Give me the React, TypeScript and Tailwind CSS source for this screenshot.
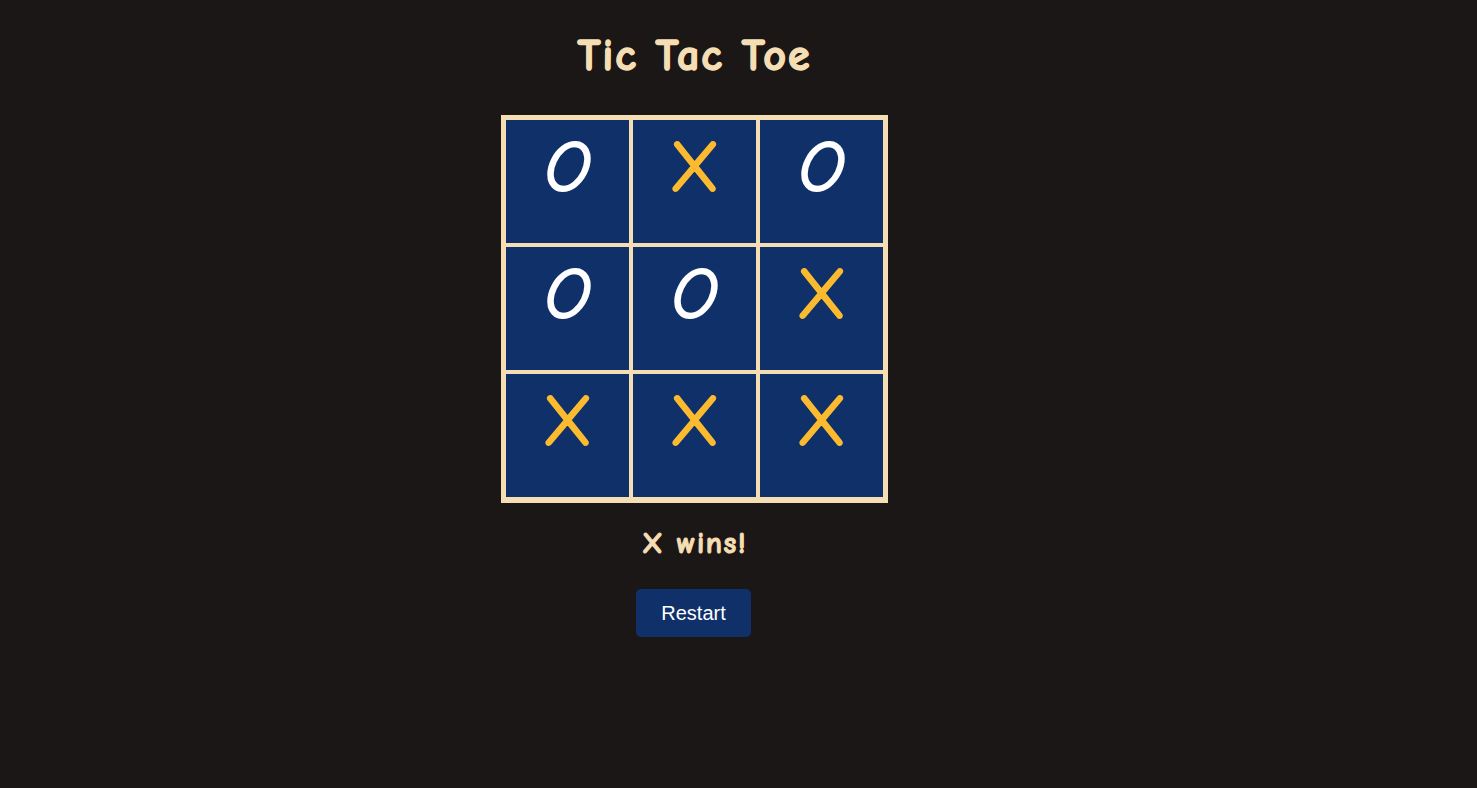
import React, { useState } from 'react';

type Mark = 'X' | 'O' | null;

const initial: Mark[] = ['O', 'X', 'O', 'O', 'O', 'X', 'X', 'X', 'X'];

const comic = { fontFamily: '"Comic Sans MS", "Comic Neue", "Open Sans", sans-serif' };

const lines = [
  [0, 1, 2], [3, 4, 5], [6, 7, 8],
  [0, 3, 6], [1, 4, 7], [2, 5, 8],
  [0, 4, 8], [2, 4, 6],
];

function getWinner(board: Mark[]): Mark {
  for (const [a, b, c] of lines) {
    if (board[a] && board[a] === board[b] && board[a] === board[c]) return board[a];
  }
  return null;
}

const Cell: React.FC<{ value: Mark; onClick: () => void }> = ({ value, onClick }) => {
  return (
    <button
      onClick={onClick}
      className="w-[123px] h-[123px] bg-[#10306a] flex items-center justify-center pb-[28px]"
    >
      {value === 'X' && (
        <span className="text-[72px] leading-none text-[#fcbb2f] [-webkit-text-stroke:2px_#fcbb2f]">X</span>
      )}
      {value === 'O' && (
        <span className="text-[72px] leading-none text-white italic [-webkit-text-stroke:2px_#ffffff]">O</span>
      )}
    </button>
  );
};

const App: React.FC = () => {
  const [board, setBoard] = useState<Mark[]>(initial);
  const [turn, setTurn] = useState<Mark>('X');
  const winner = getWinner(board);

  const play = (i: number) => {
    if (board[i] || winner) return;
    const next = [...board];
    next[i] = turn;
    setBoard(next);
    setTurn(turn === 'X' ? 'O' : 'X');
  };

  const restart = () => {
    setBoard(Array(9).fill(null));
    setTurn('X');
  };

  return (
    <div className="min-h-screen bg-[#1b1716] pr-[88px]" style={comic}>
      <div className="flex flex-col items-center">
        <h1 className="mt-[28px] text-[44px] font-bold tracking-[2px] text-[#f5deb3] leading-tight [-webkit-text-stroke:1.5px_#f5deb3]">
          Tic Tac Toe
        </h1>

        {/* Board */}
        <div className="mt-[32px] grid grid-cols-3 gap-[4px] border-[5px] border-b-[6px] border-[#f5deb3] bg-[#f5deb3]">
          {board.map((v, i) => (
            <Cell key={i} value={v} onClick={() => play(i)} />
          ))}
        </div>

        <p className="mt-[22px] text-[30px] tracking-[1.5px] leading-tight font-bold text-[#f5deb3] [-webkit-text-stroke:1px_#f5deb3]">
          {winner ? `${winner} wins!` : `Turn: ${turn}`}
        </p>

        <button
          onClick={restart}
          className="mt-[26px] bg-[#10306a] text-white text-[20px] px-[25px] h-[48px] rounded-[5px] -translate-x-[1px]"
          style={{ fontFamily: '"Liberation Sans", Arial, sans-serif' }}
        >
          Restart
        </button>
      </div>
    </div>
  );
};

export default App;
